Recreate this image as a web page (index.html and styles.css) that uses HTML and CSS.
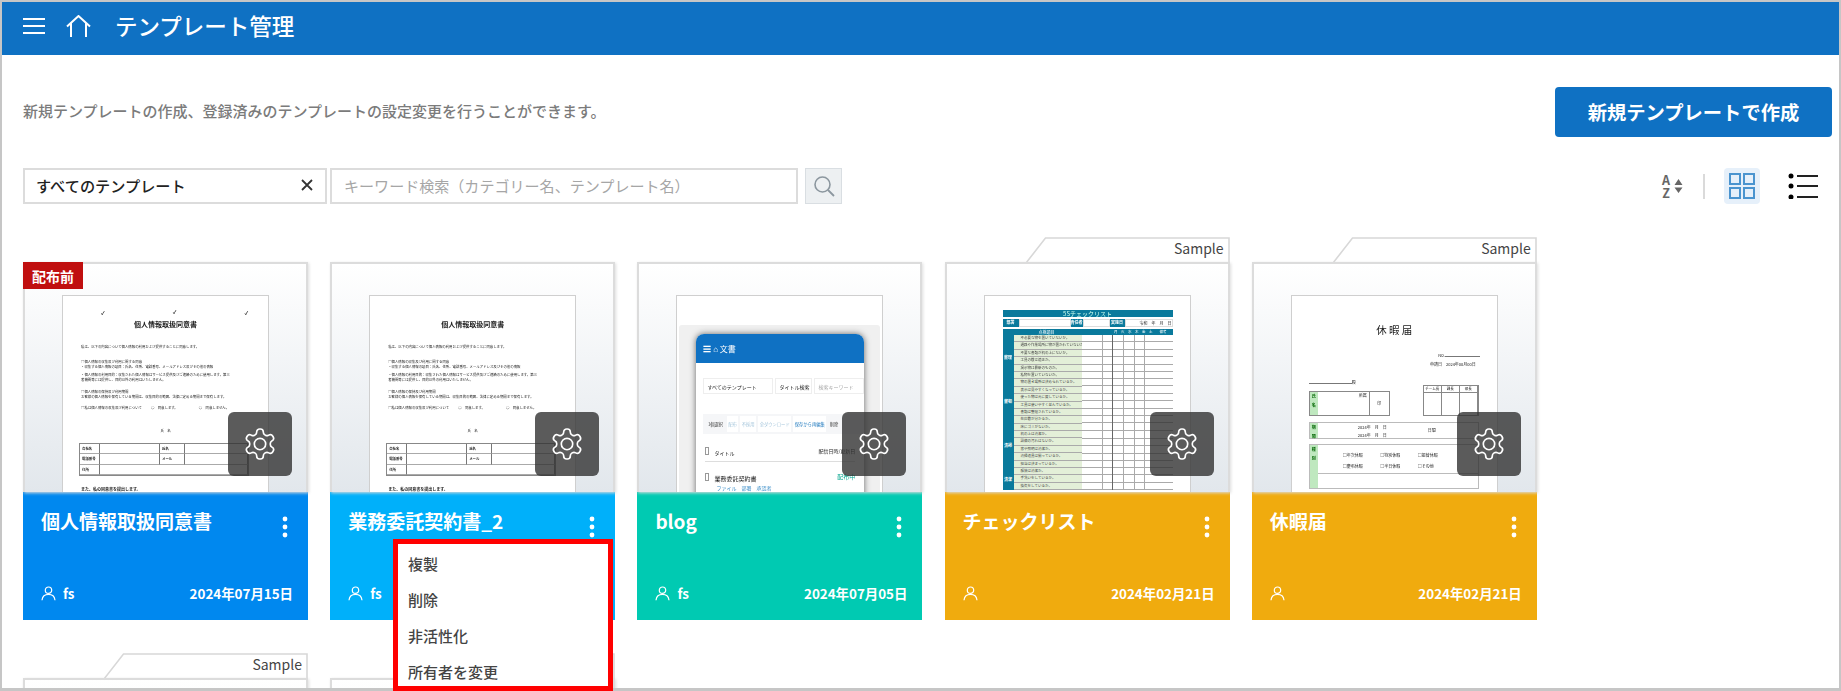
FILE: index.html
```html
<!DOCTYPE html>
<html lang="ja">
  <head>
    <meta charset="UTF-8" />
    <title>テンプレート管理</title>
    <link rel="stylesheet" href="styles.css">
  </head>
  <body>
    <svg class="sprite" xmlns="http://www.w3.org/2000/svg">
      <symbol id="gear" viewBox="0 0 24 24">
        <path d="M12.22 2h-.44a2 2 0 0 0-2 2v.18a2 2 0 0 1-1 1.73l-.43.25a2 2 0 0 1-2 0l-.15-.08a2 2 0 0 0-2.73.73l-.22.38a2 2 0 0 0 .73 2.73l.15.1a2 2 0 0 1 1 1.72v.51a2 2 0 0 1-1 1.74l-.15.09a2 2 0 0 0-.73 2.73l.22.38a2 2 0 0 0 2.73.73l.15-.08a2 2 0 0 1 2 0l.43.25a2 2 0 0 1 1 1.73V20a2 2 0 0 0 2 2h.44a2 2 0 0 0 2-2v-.18a2 2 0 0 1 1-1.73l.43-.25a2 2 0 0 1 2 0l.15.08a2 2 0 0 0 2.73-.73l.22-.39a2 2 0 0 0-.73-2.73l-.15-.08a2 2 0 0 1-1-1.74v-.5a2 2 0 0 1 1-1.74l.15-.09a2 2 0 0 0 .73-2.73l-.22-.38a2 2 0 0 0-2.73-.73l-.15.08a2 2 0 0 1-2 0l-.43-.25a2 2 0 0 1-1-1.73V4a2 2 0 0 0-2-2z" fill="none" stroke="#fff" stroke-width="1.1"/>
        <circle cx="12" cy="12" r="3.8" fill="none" stroke="#fff" stroke-width="1.1"/>
      </symbol>
      <symbol id="user" viewBox="0 0 15 15">
        <circle cx="7.5" cy="4.2" r="3.2" fill="none" stroke="#fff" stroke-width="1.2"/>
        <path d="M1 14.2c.4-3.6 3-5.8 6.5-5.8s6.1 2.2 6.5 5.8" fill="none" stroke="#fff" stroke-width="1.2"/>
      </symbol>
      <symbol id="dots" viewBox="0 0 6 22">
        <circle cx="3" cy="3" r="2.4" fill="#fff"/>
        <circle cx="3" cy="11" r="2.4" fill="#fff"/>
        <circle cx="3" cy="19" r="2.4" fill="#fff"/>
      </symbol>
      <symbol id="tabshape" viewBox="0 0 204 26">
        <path d="M0 26 19.5 1H203V26Z" fill="#fff" stroke="#d8d8d8" stroke-width="1.6"/>
      </symbol>
    </svg>

    <div class="frame">
      <div class="content">
        <header class="top_bar">
          <svg class="ic_menu" width="22" height="16" viewBox="0 0 22 16">
            <path d="M0 1h22M0 8h22M0 15h22" stroke="#fff" stroke-width="2"/>
          </svg>
          <svg class="ic_home" width="25" height="22" viewBox="0 0 25 22">
            <path d="M1 11.5 12.5 1 24 11.5M5 8v14M20 8v14" fill="none" stroke="#fff" stroke-width="2"/>
          </svg>
          <h1>テンプレート管理</h1>
        </header>

        <main class="page">
          <div class="intro_row">
            <p>新規テンプレートの作成、登録済みのテンプレートの設定変更を行うことができます。</p>
            <button class="btn_new">新規テンプレートで作成</button>
          </div>

          <div class="filter_row">
            <div class="category_box">
              <span>すべてのテンプレート</span>
              <svg width="12" height="12" viewBox="0 0 12 12">
                <path d="M1 1l10 10M11 1 1 11" stroke="#333" stroke-width="1.8"/>
              </svg>
            </div>
            <input class="keyword" type="text" placeholder="キーワード検索（カテゴリー名、テンプレート名）" />
            <button class="btn_search">
              <svg width="24" height="24" viewBox="0 0 24 24">
                <circle cx="10.5" cy="10.5" r="7.5" fill="none" stroke="#8c979f" stroke-width="1.6"/>
                <path d="M16 16l6 6" stroke="#8c979f" stroke-width="1.8"/>
              </svg>
            </button>
            <div class="view_tools">
              <div class="sort_tool">
                <div class="az">A<br>Z</div>
                <svg width="9" height="16" viewBox="0 0 9 16">
                  <path d="M4.500 1 8.500 7H.5ZM4.500 15 .5 9.500H8.500Z" fill="#666"/>
                </svg>
              </div>
              <i class="sep"></i>
              <div class="grid_tool">
                <svg width="26" height="26" viewBox="0 0 26 26">
                  <path d="M1 1h10v10H1zM15 1h10v10H15zM1 15h10v10H1zM15 15h10v10H15z" fill="none" stroke="#4a94cf" stroke-width="2"/>
                </svg>
              </div>
              <svg class="list_tool" width="30" height="26" viewBox="0 0 30 26">
                <circle cx="3" cy="3" r="2.500"/><circle cx="3" cy="13" r="2.500"/><circle cx="3" cy="24" r="2.500"/>
                <path d="M9 3h21M9 13h21M9 24h21" stroke="#222" stroke-width="2"/>
              </svg>
            </div>
          </div>

          <div class="card_grid">
            <!-- 1 -->
            <article class="card">
              <span class="badge">配布前</span>
              <div class="thumb">
                <div class="paper">
                  <div class="doc">
                    <div class="doc_marks"><b>✓</b><b class="up">✓</b><b>✓</b></div>
                    <h4>個人情報取扱同意書</h4>
                    <p class="g1">私は、以下の内容について個人情報の利用および提供することに同意します。</p>
                    <p class="g1b">□個人情報の収集及び利用に関する同意</p>
                    <p>・収集する個人情報の項目：氏名、住所、電話番号、メールアドレス及びその他の情報</p>
                    <p class="g3">・個人情報の利用目的：収集された個人情報はサービス提供及びご連絡のために使用します。第三</p>
                    <p>者機関等には提供し、目的以外の利用はいたしません。</p>
                    <p class="g2">□個人情報の保持及び利用期間</p>
                    <p>お客様の個人情報を保有している期間は、収集目的の範囲、法律に定める期間まで保有します。</p>
                    <p class="consent"><span>□私は個人情報の収集及び利用について</span><span>○　同意します。</span><span>○　同意しません。</span></p>
                    <p class="sign">氏　名</p>
                    <div class="sign_table">
                      <b>会社名</b><i></i><b>氏名</b><i></i>
                      <b>電話番号</b><i></i><b>メール</b><i></i>
                      <b>住所</b><i class="wide"></i>
                    </div>
                    <p class="closing">また、私の同意書を提出します。</p>
                  </div>
                </div>
                <div class="gear"><svg width="36" height="36"><use href="#gear"/></svg></div>
              </div>
              <div class="foot foot_blue">
                <div class="foot_head"><h3>個人情報取扱同意書</h3><svg width="6" height="22"><use href="#dots"/></svg></div>
                <div class="foot_meta"><span class="owner"><svg width="15" height="15"><use href="#user"/></svg>fs</span><time>2024年07月15日</time></div>
              </div>
            </article>

            <!-- 2 -->
            <article class="card">
              <div class="thumb">
                <div class="paper">
                  <div class="doc">
                    <div class="doc_marks"></div>
                    <h4>個人情報取扱同意書</h4>
                    <p class="g1">私は、以下の内容について個人情報の利用および提供することに同意します。</p>
                    <p class="g1b">□個人情報の収集及び利用に関する同意</p>
                    <p>・収集する個人情報の項目：氏名、住所、電話番号、メールアドレス及びその他の情報</p>
                    <p class="g3">・個人情報の利用目的：収集された個人情報はサービス提供及びご連絡のために使用します。第三</p>
                    <p>者機関等には提供し、目的以外の利用はいたしません。</p>
                    <p class="g2">□個人情報の保持及び利用期間</p>
                    <p>お客様の個人情報を保有している期間は、収集目的の範囲、法律に定める期間まで保有します。</p>
                    <p class="consent"><span>□私は個人情報の収集及び利用について</span><span>○　同意します。</span><span>○　同意しません。</span></p>
                    <p class="sign">氏　名</p>
                    <div class="sign_table">
                      <b>会社名</b><i></i><b>氏名</b><i></i>
                      <b>電話番号</b><i></i><b>メール</b><i></i>
                      <b>住所</b><i class="wide"></i>
                    </div>
                    <p class="closing">また、私の同意書を提出します。</p>
                  </div>
                </div>
                <div class="gear"><svg width="36" height="36"><use href="#gear"/></svg></div>
              </div>
              <div class="foot foot_sky">
                <div class="foot_head"><h3>業務委託契約書_2</h3><svg width="6" height="22"><use href="#dots"/></svg></div>
                <div class="foot_meta"><span class="owner"><svg width="15" height="15"><use href="#user"/></svg>fs</span><time>2024年07月15日</time></div>
              </div>
            </article>

            <!-- 3 -->
            <article class="card">
              <div class="thumb">
                <div class="paper paper_blog">
                  <div class="shot">
                    <div class="app">
                      <div class="app_head"><span>☰ ⌂ 文書</span></div>
                      <div class="app_filters"><span class="w1">すべてのテンプレート</span><span class="w2">タイトル検索</span><span class="w3">検索キーワード</span></div>
                      <div class="app_actions"><span class="plain">1個選択</span><span class="pale">配布</span><span class="pale">不採用</span><span class="pale">全ダウンロード</span><span class="link">保存から再編集</span><span class="plain">削除</span></div>
                      <div class="app_th"><span><i></i>タイトル</span><span>配信日時/更新日</span></div>
                      <div class="app_tr"><span><i></i>業務委託契約書</span><span class="green">配布中</span></div>
                      <div class="app_sub"><span>ファイル　部署　承認者</span></div>
                    </div>
                  </div>
                </div>
                <div class="gear"><svg width="36" height="36"><use href="#gear"/></svg></div>
              </div>
              <div class="foot foot_green">
                <div class="foot_head"><h3>blog</h3><svg width="6" height="22"><use href="#dots"/></svg></div>
                <div class="foot_meta"><span class="owner"><svg width="15" height="15"><use href="#user"/></svg>fs</span><time>2024年07月05日</time></div>
              </div>
            </article>

            <!-- 4 -->
            <article class="card">
              <div class="sample_tab"><svg width="204" height="26"><use href="#tabshape"/></svg><span>Sample</span></div>
              <div class="thumb">
                <div class="paper">
                  <div class="check">
                    <div class="check_title">5Sチェックリスト</div>
                    <div class="check_info"><b>部署</b><i></i><b>責任者</b><i></i><b>実施日</b><i>令和　年　月　日</i></div>
                    <div class="check_head"><span>点検項目</span><span class="check_cols">月　火　水　木　金　土　　備考</span></div>
                    <div class="check_sec"><b>整理</b><div class="check_items">
                      <p>不必要な物を置いていないか。</p><p>通路や作業場所に物が置かれていないか。</p><p>不要な書類が机の上にないか。</p><p>工具の数は適正か。</p><p>掲示物は最新のものか。</p><p>私物を置いていないか。</p>
                    </div></div>
                    <div class="check_sec"><b>整頓</b><div class="check_items">
                      <p>物の置き場所は決められているか。</p><p>表示は見やすくなっているか。</p><p>使った物は元に戻しているか。</p><p>工具は使いやすく並んでいるか。</p><p>書類は整理されているか。</p><p>在庫数が分かるか。</p>
                    </div></div>
                    <div class="check_sec"><b>清掃</b><div class="check_items">
                      <p>床にゴミがないか。</p><p>机の上は清潔か。</p><p>設備の汚れはないか。</p><p>窓や照明は清潔か。</p><p>清掃道具は揃っているか。</p><p>担当は決まっているか。</p>
                    </div></div>
                    <div class="check_sec"><b>清潔</b><div class="check_items">
                      <p>服装は清潔か。</p><p>手洗いをしているか。</p><p>換気をしているか。</p>
                    </div></div>
                  </div>
                </div>
                <div class="gear"><svg width="36" height="36"><use href="#gear"/></svg></div>
              </div>
              <div class="foot foot_amber">
                <div class="foot_head"><h3>チェックリスト</h3><svg width="6" height="22"><use href="#dots"/></svg></div>
                <div class="foot_meta"><span class="owner"><svg width="15" height="15"><use href="#user"/></svg></span><time>2024年02月21日</time></div>
              </div>
            </article>

            <!-- 5 -->
            <article class="card">
              <div class="sample_tab"><svg width="204" height="26"><use href="#tabshape"/></svg><span>Sample</span></div>
              <div class="thumb">
                <div class="paper">
                  <div class="leave">
                    <h4>休 暇 届</h4>
                    <p class="leave_no">No.<u></u></p>
                    <p class="leave_date">申請日　2024年00月00日</p>
                    <p class="leave_to"><u></u>殿</p>
                    <div class="leave_row">
                      <div class="leave_name"><b>氏<br>名</b><span>所属</span><em>印</em></div>
                      <div class="leave_stamp"><span>チーム長</span><span>課長</span><span>部長</span></div>
                    </div>
                    <div class="leave_period"><b>期<br>間</b><p>2024年　月　日<br>2024年　月　日</p><span>日間</span></div>
                    <div class="leave_kind"><b>種<br>別</b><div><span>□年次休暇</span><span>□特別休暇</span><span>□振替休暇</span><span>□慶弔休暇</span><span>□半日休暇</span><span>□その他</span></div></div>
                  </div>
                </div>
                <div class="gear"><svg width="36" height="36"><use href="#gear"/></svg></div>
              </div>
              <div class="foot foot_amber">
                <div class="foot_head"><h3>休暇届</h3><svg width="6" height="22"><use href="#dots"/></svg></div>
                <div class="foot_meta"><span class="owner"><svg width="15" height="15"><use href="#user"/></svg></span><time>2024年02月21日</time></div>
              </div>
            </article>

            <!-- second row, cut off by the window -->
            <article class="card">
              <div class="sample_tab"><svg width="204" height="26"><use href="#tabshape"/></svg><span>Sample</span></div>
              <div class="thumb"></div>
            </article>
            <article class="card">
              <div class="sample_tab"><svg width="204" height="26"><use href="#tabshape"/></svg></div>
              <div class="thumb"></div>
            </article>
          </div>
        </main>
      </div>

      <ul class="card_menu">
        <li>複製</li>
        <li>削除</li>
        <li>非活性化</li>
        <li>所有者を変更</li>
      </ul>
    </div>
  </body>
</html>
```

FILE: styles.css
```css
* {
  box-sizing: border-box;
  padding: 0;
  margin: 0;
}
html,
body {
  height: 691px;
  overflow: hidden;
  background-color: #fff;
}
body {
  font-family: "Noto Sans CJK JP", "Noto Sans", sans-serif;
  color: #333;
}
.sprite {
  display: none;
}
.frame {
  position: relative;
  width: 1841px;
  height: 691px;
  border: 2px solid #c6c6c6;
  border-bottom-width: 3px;
}
.content {
  height: 100%;
  overflow: hidden;
}

/* blue bar */
.top_bar {
  height: 53px;
  padding: 0 0 6px 21px;
  display: flex;
  align-items: center;
  background-color: #0f71c3;
  color: #fff;
}
.ic_home {
  margin-left: 21px;
}
.top_bar h1 {
  margin-left: 24px;
  font-size: 22.5px;
  line-height: 1;
  font-weight: 500;
}

.page {
  padding: 32px 7px 0 21px;
}
.intro_row {
  height: 50px;
  display: flex;
  align-items: center;
  justify-content: space-between;
}
.intro_row p {
  margin-bottom: 3px;
  font-size: 15px;
  font-weight: 500;
  color: #7b7b7b;
}
.btn_new {
  width: 277px;
  height: 50px;
  border: none;
  border-radius: 4px;
  background-color: #0f71c3;
  color: #fff;
  font-family: inherit;
  font-size: 19.3px;
  font-weight: 700;
}

.filter_row {
  height: 36px;
  margin-top: 31px;
  display: flex;
  align-items: center;
}
.category_box {
  width: 304px;
  height: 36px;
  padding: 0 12px 2px 11px;
  display: flex;
  align-items: center;
  justify-content: space-between;
  border: 2px solid #dcdcdc;
  font-size: 15.2px;
  font-weight: 500;
  color: #222;
}
.keyword {
  width: 468px;
  height: 36px;
  margin-left: 3px;
  padding: 0 12px 2px;
  border: 2px solid #dcdcdc;
  font-family: inherit;
  font-size: 15.05px;
  outline: none;
}
.keyword::placeholder {
  color: #a6a6a6;
}
.btn_search {
  width: 37px;
  height: 36px;
  margin-left: 7px;
  display: flex;
  align-items: center;
  justify-content: center;
  border: 1px solid #d9dee2;
  background-color: #edf0f2;
}
.view_tools {
  margin-left: auto;
  margin-right: 14px;
  display: flex;
  align-items: center;
}
.sort_tool {
  display: flex;
  align-items: center;
  gap: 4px;
}
.az {
  font-size: 12.5px;
  line-height: 13px;
  font-weight: 700;
  text-align: center;
  color: #666;
}
.sep {
  width: 2px;
  height: 25px;
  margin-left: 20px;
  background-color: #dadada;
}
.grid_tool {
  width: 36px;
  height: 36px;
  margin-left: 19px;
  display: flex;
  align-items: center;
  justify-content: center;
  border-radius: 4px;
  background-color: #e6f0fa;
}
.list_tool {
  margin-left: 28px;
}

/* cards */
.card_grid {
  margin-top: 58px;
  display: grid;
  grid-template-columns: repeat(5, 285px);
  column-gap: 22.2px;
  row-gap: 58px;
}
.card {
  position: relative;
}
.sample_tab {
  position: absolute;
  top: -25px;
  right: 0;
  width: 204px;
  height: 26px;
  padding: 0 6px 4px 0;
  display: flex;
  justify-content: flex-end;
  align-items: center;
  font-size: 14px;
  color: #444;
}
.sample_tab svg {
  position: absolute;
  top: 0;
  left: 0;
}
.sample_tab span {
  position: relative;
}
.thumb {
  position: relative;
  height: 230px;
  padding-top: 31px;
  display: flex;
  justify-content: center;
  overflow: hidden;
  border: 2px solid #dcdcdc;
  border-bottom: none;
  background: linear-gradient(#fff, #e2e7ec);
  box-shadow: 1px 1px 3px #ddd;
}
.badge {
  position: absolute;
  z-index: 1;
  top: 0;
  left: 0;
  width: 60px;
  height: 27px;
  display: flex;
  align-items: center;
  justify-content: center;
  background-color: #c00f0f;
  color: #fff;
  font-size: 14px;
  font-weight: 700;
}
.gear {
  position: absolute;
  right: 14px;
  bottom: 16px;
  width: 64px;
  height: 64px;
  display: flex;
  align-items: center;
  justify-content: center;
  border-radius: 6px;
  background-color: rgba(50, 50, 50, 0.8);
}
.foot {
  height: 128px;
  padding: 15px 15px 17px 18px;
  display: flex;
  flex-direction: column;
  justify-content: space-between;
  color: #fff;
}
.foot_blue {
  background-color: #0088ef;
}
.foot_sky {
  background-color: #00b0fa;
}
.foot_green {
  background-color: #00cab2;
}
.foot_amber {
  background-color: #f0ab0e;
}
.foot_head {
  display: flex;
  justify-content: space-between;
  align-items: flex-start;
}
.foot_head svg {
  margin: 9px 5px 0 0;
}
.foot_head h3 {
  font-size: 19px;
  line-height: 28px;
  font-weight: 700;
}
.foot_meta {
  height: 20px;
  display: flex;
  justify-content: space-between;
  align-items: center;
  font-size: 13.4px;
  font-weight: 700;
}
.owner {
  display: flex;
  align-items: center;
  gap: 7px;
}

/* paper previews */
.paper {
  width: 207px;
  flex: none;
  height: 300px;
  border: 1px solid #cfcfcf;
  background-color: #fff;
  overflow: hidden;
  color: #222;
}
.doc,
.check,
.leave,
.shot {
  filter: blur(0.45px);
}
.doc {
  padding: 13px 18px 0;
  font-size: 3.4px;
  line-height: 5px;
  white-space: nowrap;
}
.doc_marks {
  height: 8px;
  padding: 0 2px 0 20px;
  display: flex;
  justify-content: space-between;
  font-size: 5px;
  line-height: 8px;
}
.doc_marks .up {
  margin-top: -1px;
}
.doc h4 {
  margin-top: 2px;
  height: 10px;
  font-size: 7px;
  line-height: 10px;
  text-align: center;
}
.g1 {
  margin-top: 15px;
}
.g1b {
  margin-top: 10px;
}
.g2 {
  margin-top: 7px;
}
.g3 {
  margin-top: 3px;
}
.consent {
  margin-top: 6px;
  display: flex;
  gap: 9px;
}
.consent span:last-child {
  margin-left: 12px;
}
.sign {
  margin-top: 18px;
  text-align: center;
}
.sign_table {
  width: 170px;
  margin-top: 9.5px;
  margin-left: -2px;
  display: grid;
  grid-template-columns: 20px 60px 25px 1fr;
  grid-auto-rows: 10.5px;
  border: 1px solid #888;
  line-height: 9px;
}
.sign_table b,
.sign_table i {
  padding-left: 2px;
  border-right: 1px solid #777;
  border-bottom: 1px solid #aaa;
}
.sign_table .wide {
  grid-column: span 3;
}
.closing {
  margin-top: 11px;
  font-size: 4px;
  font-weight: 700;
}

/* checklist preview */
.check {
  padding: 14px 17px 0 18px;
  font-size: 4px;
  line-height: 7px;
  white-space: nowrap;
}
.check_title {
  height: 7px;
  background-color: #0a7a9c;
  color: #cfe;
  font-size: 6px;
  text-align: center;
}
.check_info {
  height: 7px;
  margin-top: 2px;
  display: grid;
  grid-template-columns: 16px 52px 12px 27px 15px 1fr;
  line-height: 6px;
}
.check_info b {
  background-color: #0a7a9c;
  color: #fff;
  text-align: center;
}
.check_info i {
  border: 1px solid #ddd;
  font-style: normal;
  text-align: right;
}
.check_head {
  height: 6px;
  margin-top: 3px;
  padding: 0 6px 0 36px;
  display: flex;
  justify-content: space-between;
  background-color: #0a7a9c;
  color: #fff;
  line-height: 6px;
}
.check_cols {
  font-size: 3.5px;
}
.check_sec {
  display: flex;
}
.check_sec b {
  width: 11px;
  flex: none;
  display: flex;
  align-items: center;
  justify-content: center;
  background-color: #0a7a9c;
  color: #fff;
}
.check_items {
  flex: 1;
  background-image:
    linear-gradient(to right, #e3efd8 68px, transparent 68px),
    linear-gradient(to right, transparent 88px, #aaa 88px, #aaa 89px, transparent 89px, transparent 98px, #666 98px, #666 99px, transparent 99px, transparent 109px, #aaa 109px, #aaa 110px, transparent 110px, transparent 120px, #aaa 120px, #aaa 121px, transparent 121px, transparent 130px, #aaa 130px, #aaa 131px, transparent 131px),
    repeating-linear-gradient(#fff 0, #fff 6.4px, #aaa 6.4px, #aaa 7.400px);
}
.check_items p {
  height: 7.400px;
  padding-left: 7px;
  width: 68px;
  overflow: hidden;
  border-bottom: 1px solid #aaa;
  font-size: 3.500px;
  line-height: 6.400px;
  color: #444;
}

/* holiday form preview */
.leave {
  padding: 27px 17px 0 17px;
  font-size: 4px;
  line-height: 6px;
  white-space: nowrap;
}
.leave h4 {
  height: 14px;
  font-size: 10.5px;
  line-height: 14px;
  font-weight: 400;
  text-align: center;
}
.leave u {
  display: inline-block;
  width: 35px;
  height: 5px;
  border-bottom: 1px solid #777;
}
.leave_no {
  margin-top: 15px;
  text-align: right;
}
.leave_date {
  margin-top: 3px;
  padding-right: 4px;
  text-align: right;
}
.leave_to {
  margin-top: 12px;
}
.leave_to u {
  width: 43px;
}
.leave_row {
  display: flex;
  justify-content: space-between;
  align-items: flex-end;
  padding-right: 1px;
}
.leave_name {
  width: 81px;
  height: 25px;
  display: flex;
  border: 1px solid #888;
}
.leave_name b,
.leave_period b,
.leave_kind b {
  width: 8px;
  flex: none;
  background-color: #bfe8bf;
  color: #060;
  text-align: center;
  line-height: 9px;
}
.leave_name span {
  flex: 1;
  text-align: right;
  padding-right: 2px;
  border-right: 1px solid #888;
}
.leave_name em {
  width: 19px;
  font-style: normal;
  text-align: center;
  line-height: 23px;
}
.leave_stamp {
  width: 56px;
  height: 31px;
  display: grid;
  grid-template-columns: repeat(3, 1fr);
  border: 1px solid #888;
  background: linear-gradient(#888, #888) 0 6px / 100% 1px no-repeat;
}
.leave_stamp span {
  border-right: 1px solid #888;
  text-align: center;
  font-size: 3.500px;
}
.leave_period {
  margin-top: 6px;
  height: 17px;
  display: flex;
  border: 1px solid #bbb;
  margin-right: 1px;
}
.leave_period p {
  flex: 1;
  padding-left: 40px;
  line-height: 8px;
}
.leave_period span {
  width: 50px;
  line-height: 15px;
}
.leave_kind {
  margin-top: 5px;
  height: 45px;
  display: flex;
  border: 1px solid #bbb;
  margin-right: 1px;
}
.leave_kind div {
  flex: 1;
  height: 29px;
  padding: 6px 40px 0 25px;
  display: grid;
  grid-template-columns: repeat(3, auto);
  justify-content: space-between;
  line-height: 9px;
  border-bottom: 1px solid #bbb;
}

/* blog preview: a screen shot of the app itself */
.paper_blog .shot {
  height: 270px;
  margin: 29px 2px 0;
  padding: 9px 16px 0 17px;
  background-color: #f0f0f0;
  border-radius: 3px 3px 0 0;
  font-size: 5px;
  line-height: 7px;
  white-space: nowrap;
}
.app {
  height: 240px;
  overflow: hidden;
  border-radius: 8px 8px 0 0;
  background-color: #fff;
  box-shadow: 0 0 6px #666;
}
.app_head {
  height: 29px;
  padding-left: 7px;
  display: flex;
  align-items: center;
  background-color: #0f71c3;
  color: #fff;
  font-size: 8px;
}
.app_filters {
  margin: 15px 0 0 7px;
  display: flex;
  gap: 2px;
}
.app_filters span {
  height: 16px;
  padding-left: 3px;
  line-height: 15px;
  border: 1px solid #eee;
  overflow: hidden;
}
.w1 {
  width: 70px;
  flex: none;
}
.w2 {
  width: 37px;
  flex: none;
}
.w3 {
  flex: 1;
  color: #aaa;
}
.app_actions {
  height: 20px;
  margin: 20px 0 0 7px;
  padding-left: 3px;
  display: flex;
  align-items: center;
  gap: 2px;
  overflow: hidden;
  background-color: #f5f6f8;
  font-size: 4.3px;
}
.app_actions span {
  height: 16px;
  padding: 0 1.500px;
  line-height: 16px;
  flex: none;
}
.app_actions .plain {
  color: #444;
}
.app_actions .pale {
  background-color: #fff;
  color: #a9c8dd;
}
.app_actions .link {
  background-color: #fff;
  color: #1c77bd;
}
.app_th,
.app_tr {
  margin: 13px 9px 0 9px;
  padding-bottom: 5px;
  display: flex;
  justify-content: space-between;
  border-bottom: 1px solid #ddd;
}
.app_tr {
  margin-top: 11px;
  border: none;
  font-size: 6px;
}
.app_th i,
.app_tr i {
  display: inline-block;
  width: 4px;
  height: 8px;
  margin-right: 5px;
  border: 1px solid #999;
}
.green {
  color: #00a48c;
}
.app_sub {
  margin: -3px 0 0 20px;
  color: #3d8fc9;
}

/* open menu, marked up with the red frame */
.card_menu {
  position: absolute;
  top: 537px;
  left: 391px;
  bottom: -3px;
  width: 220px;
  padding: 2px 0 0 10px;
  list-style: none;
  border: 5px solid #f00;
  background-color: #fff;
  font-size: 15px;
  font-weight: 500;
  color: #444;
}
.card_menu li {
  height: 36px;
  line-height: 36px;
}
```
